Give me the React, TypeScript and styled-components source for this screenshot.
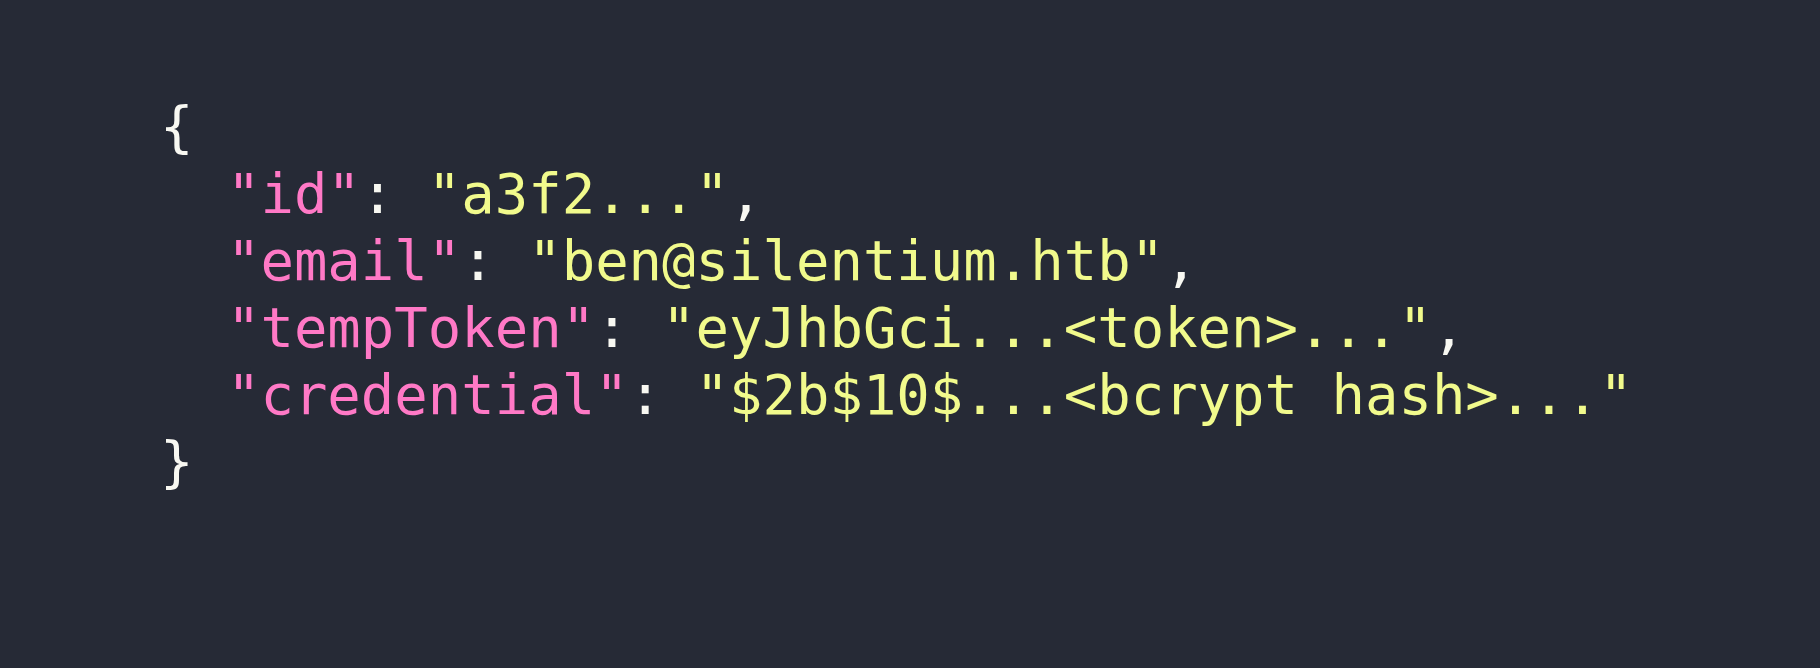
import React from "react";
import styled, { createGlobalStyle } from "styled-components";

const Global = createGlobalStyle`
  html, body { margin: 0; padding: 0; background: #262a36; }
  #root { width: 1820px; height: 668px; }
`;

const Page = styled.div`
  width: 1820px;
  height: 668px;
  box-sizing: border-box;
  background: #262a36;
  padding: 93px 0 0 160px;
`;

const Code = styled.pre`
  margin: 0;
  font-family: "DejaVu Sans Mono", "Liberation Mono", monospace;
  font-size: 55.6px;
  line-height: 67px;
  color: #f8f8f2;
  white-space: pre;
`;

const Line = styled.div<{ $indent?: boolean }>`
  padding-left: ${(p) => (p.$indent ? "2ch" : "0")};
`;

const Key = styled.span`
  color: #ff79c6;
`;

const Str = styled.span`
  color: #f1fa8c;
`;

const Punct = styled.span`
  color: #f8f8f2;
`;

const entries: { key: string; value: string; last?: boolean }[] = [
  { key: "id", value: "a3f2..." },
  { key: "email", value: "ben@silentium.htb" },
  { key: "tempToken", value: "eyJhbGci...<token>..." },
  { key: "credential", value: "$2b$10$...<bcrypt hash>...", last: true },
];

export default function App() {
  return (
    <>
      <Global />
      <Page>
        <Code>
          <Line>
            <Punct>{"{"}</Punct>
          </Line>
          {entries.map((e) => (
            <Line $indent key={e.key}>
              <Key>{`"${e.key}"`}</Key>
              <Punct>: </Punct>
              <Str>{`"${e.value}"`}</Str>
              {!e.last && <Punct>,</Punct>}
            </Line>
          ))}
          <Line>
            <Punct>{"}"}</Punct>
          </Line>
        </Code>
      </Page>
    </>
  );
}
